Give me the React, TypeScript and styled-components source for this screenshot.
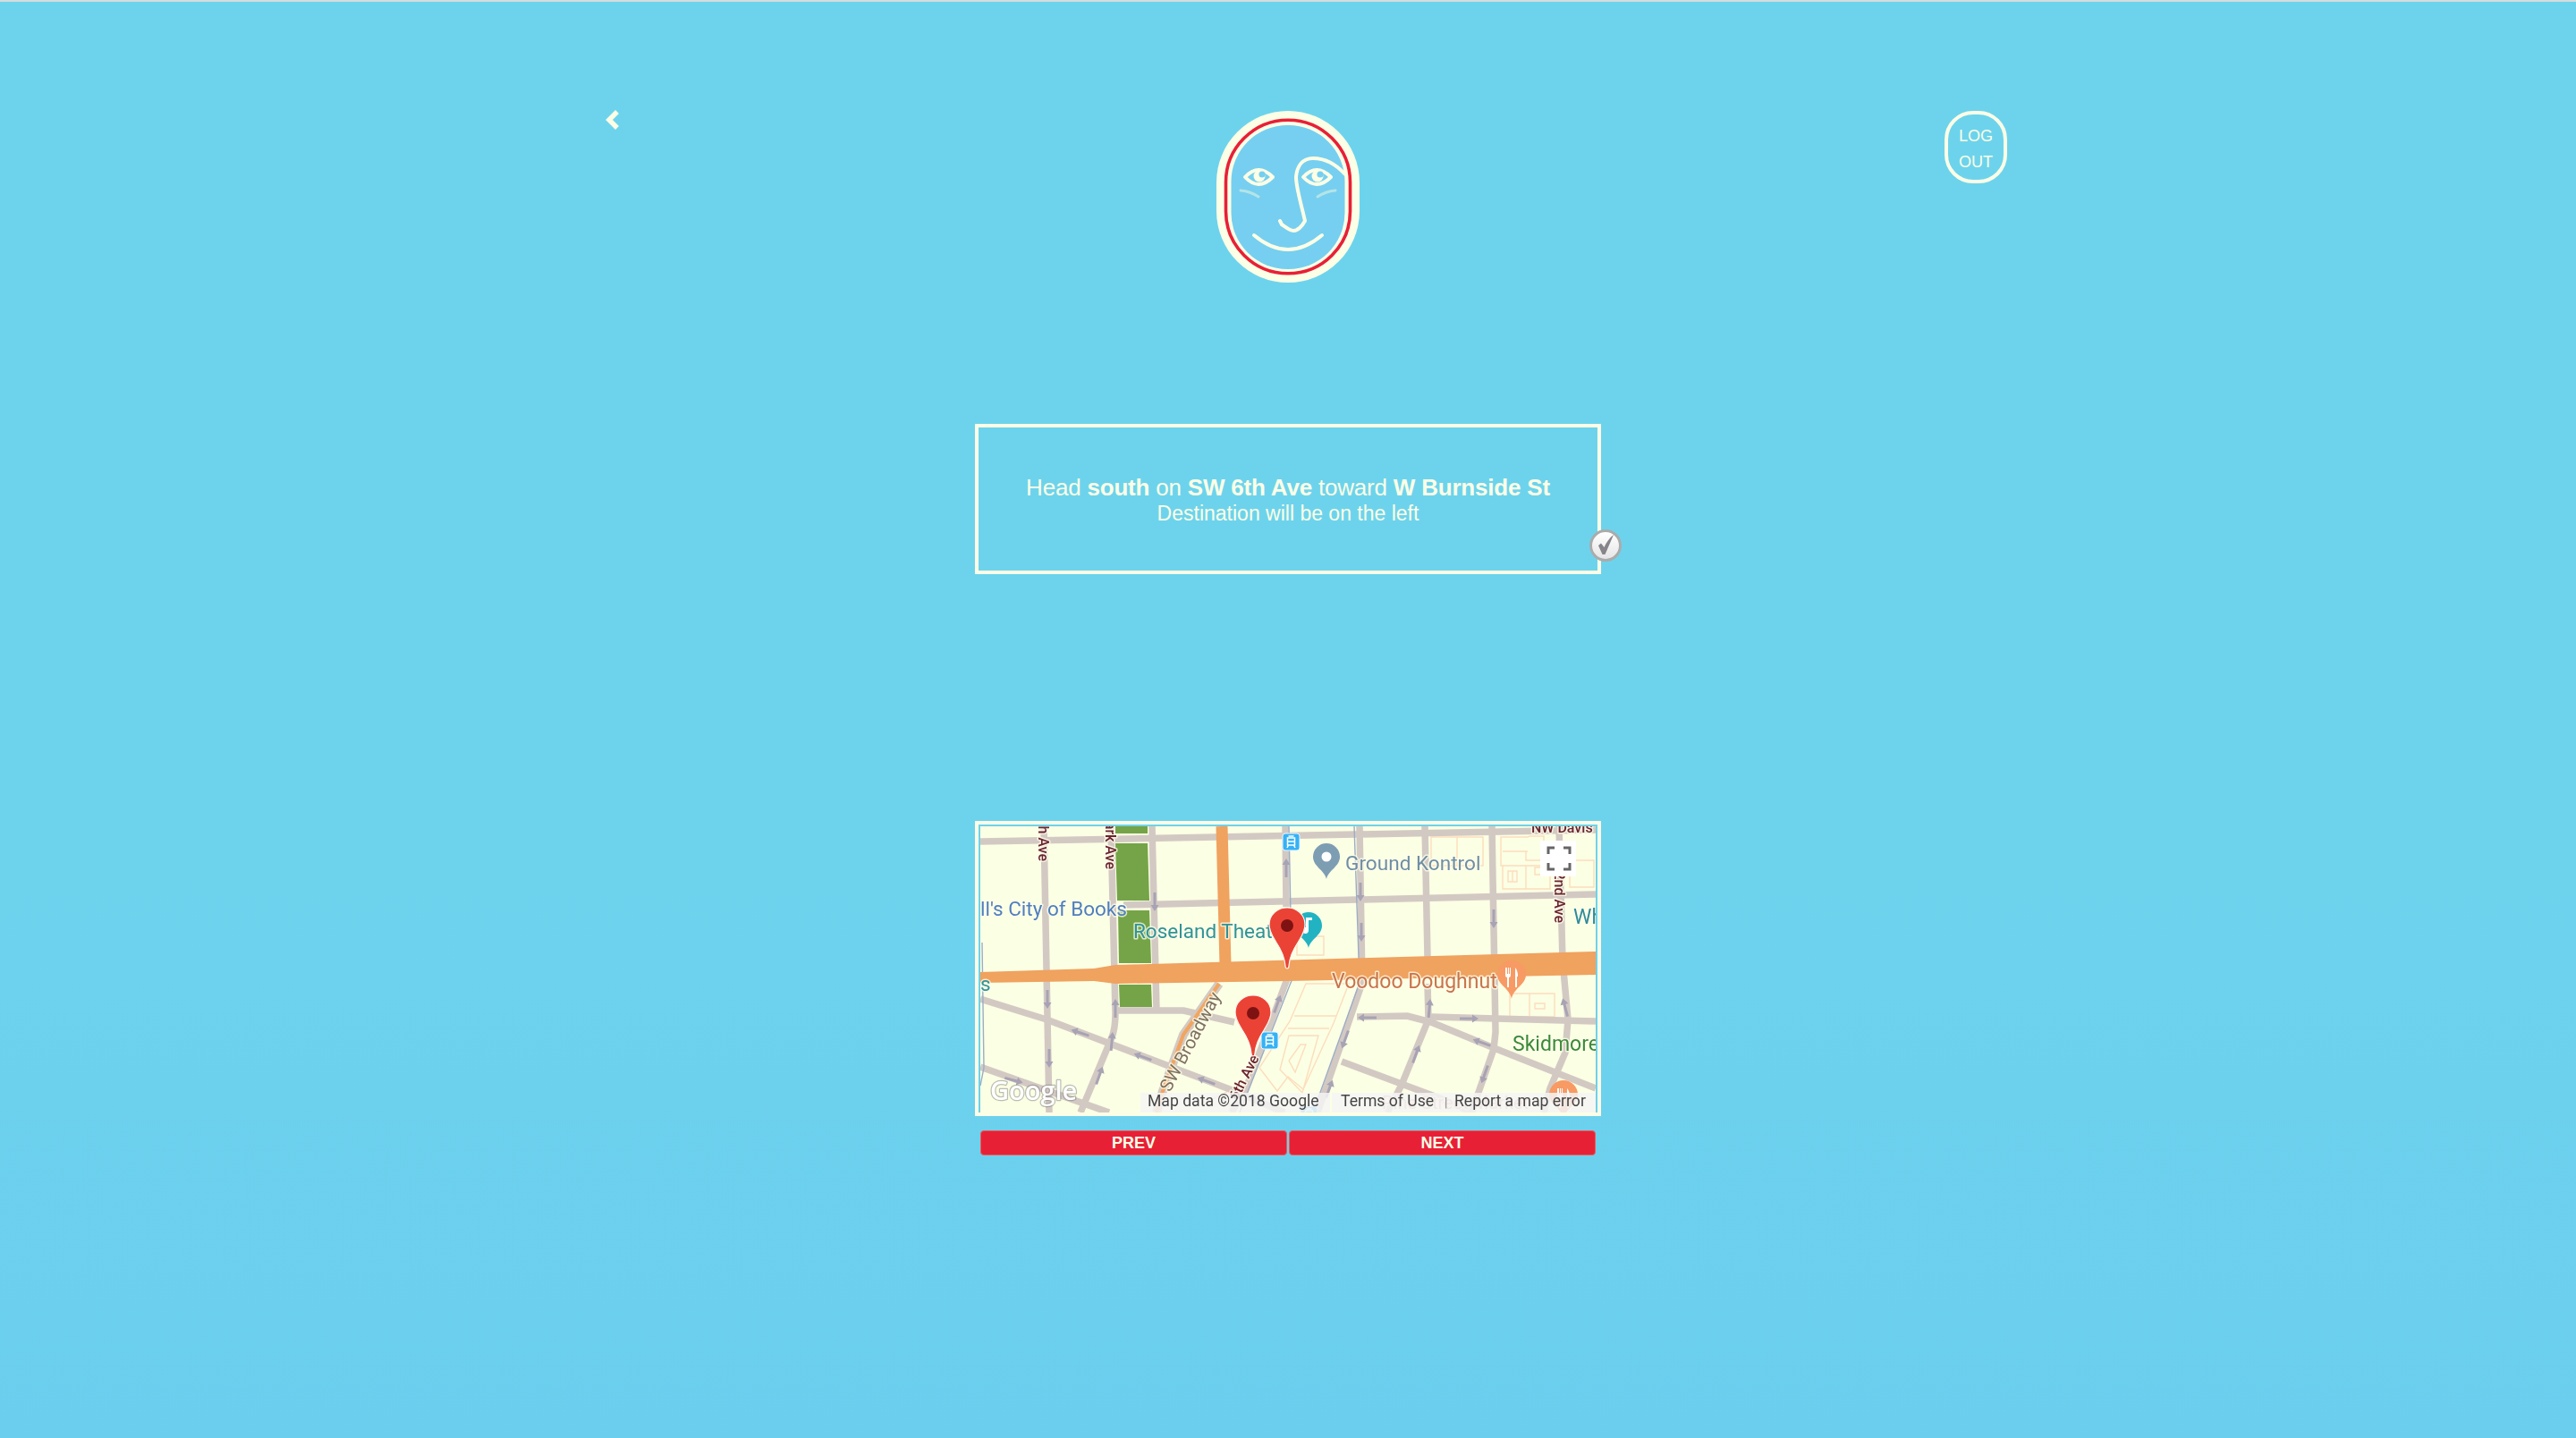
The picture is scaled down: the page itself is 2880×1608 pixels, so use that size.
import React from "react";
import styled, { createGlobalStyle } from "styled-components";

const CREAM = "#fbffe6";
const RED = "#e82036";

const Global = createGlobalStyle`
  html, body { margin: 0; padding: 0; }
  body { font-family: "Liberation Sans", Arial, sans-serif; }
`;

const Page = styled.main`
  width: 2880px;
  height: 1608px;
  overflow: hidden;
  display: flex;
  flex-direction: column;
  align-items: center;
  background: linear-gradient(180deg, #6dd3ed 0%, #6dd3ed 60%, #6bceee 100%);
  border-top: 2px solid #d6dcdc;
  box-sizing: border-box;
  color: ${CREAM};
`;

const Header = styled.header`
  width: 1608px;
  display: grid;
  grid-template-columns: 1fr 160px 1fr;
  align-items: start;
  padding-top: 120px;
`;

const BackButton = styled.button`
  justify-self: start;
  width: 16px;
  height: 24px;
  margin-left: 41px;
  padding: 0;
  border: 0;
  background: none;
  display: block;
`;

const LogoMark = styled.svg`
  width: 160px;
  height: 192px;
  margin-top: 2px;
  display: block;
`;

const LogOut = styled.button`
  justify-self: end;
  width: 70px;
  height: 81px;
  margin-top: 2px;
  padding: 4px 0 0;
  box-sizing: border-box;
  border: 4px solid ${CREAM};
  border-radius: 32px;
  background: none;
  color: ${CREAM};
  font: 400 18px/29px "Liberation Sans", Arial, sans-serif;
`;

const Instruction = styled.section`
  position: relative;
  width: 700px;
  height: 168px;
  margin-top: 158px;
  box-sizing: border-box;
  border: 4px solid ${CREAM};
  padding-top: 52px;
  text-align: center;
`;

const Primary = styled.div`
  font-size: 26px;
  line-height: 30px;
  letter-spacing: -0.2px;
  b { font-weight: 700; }
`;

const Secondary = styled.div`
  font-size: 23px;
  line-height: 28px;
`;

const CheckBadge = styled.span`
  position: absolute;
  right: -27px;
  bottom: 10px;
  width: 36px;
  height: 36px;
  box-sizing: border-box;
  border: 3px solid #ababab;
  border-radius: 50%;
  background: linear-gradient(180deg, #ffffff 0%, #e6e6e6 100%);
  display: flex;
  align-items: center;
  justify-content: center;
`;

const MapFrame = styled.section`
  width: 700px;
  height: 330px;
  margin-top: 276px;
  box-sizing: border-box;
  border: 4px solid ${CREAM};
  padding: 2px;
`;

const MapSvg = styled.svg`
  width: 688px;
  height: 320px;
  display: block;
  background: #fbffe4;
  font-family: Roboto, "Liberation Sans", sans-serif;
  filter: blur(0.45px);
`;

const Label = styled.text<{ $color: string; $size?: number; $halo?: boolean; $weight?: number; $end?: boolean }>`
  fill: ${(p) => p.$color};
  font-size: ${(p) => p.$size ?? 23}px;
  font-weight: ${(p) => p.$weight ?? 400};
  text-anchor: ${(p) => (p.$end ? "end" : "start")};
  ${(p) =>
    p.$halo === false
      ? ""
      : `stroke: rgba(255,255,235,0.75); stroke-width: 3px; paint-order: stroke; stroke-linejoin: round;`}
`;

const GoogleMark = styled.text`
  fill: #ffffff;
  font-family: "Open Sans", Roboto, sans-serif;
  font-size: 29px;
  font-weight: 600;
  stroke: rgba(110, 110, 110, 0.45);
  stroke-width: 2.5px;
  paint-order: stroke;
  stroke-linejoin: round;
`;

const Controls = styled.nav`
  width: 688px;
  margin-top: 16px;
  display: grid;
  grid-template-columns: 1fr 1fr;
  column-gap: 2px;
`;

const NavButton = styled.button`
  height: 28px;
  padding: 0;
  box-sizing: border-box;
  border: 1.5px solid #ea5a5a;
  border-radius: 4px;
  background: ${RED};
  color: ${CREAM};
  font: 700 18px/24px "Liberation Sans", Arial, sans-serif;
`;

const roads: string[] = [
  "M0,17 L688,4",
  "M160,88 L688,76",
  "M71,0 L77,320",
  "M146,0 L151,209 Q151,226 147,236 L112,320",
  "M192,0 L197,206",
  "M154,206 L227,206 L284,219",
  "M0,193 L74,216 L284,296 L340,320",
  "M0,269 L144,320",
  "M341,0 L342,90",
  "M347,160 L331,203 L297,293 L281,320",
  "M424,0 L427,175 L377,320",
  "M497,0 L500,146",
  "M500,176 L501,216 L471,289 L455,320",
  "M572,0 L576,230 L574,249 L554,306 L550,320",
  "M647,0 L651,150 L657,216 L654,253 L637,293 L630,320",
  "M421,213 L477,212 L504,219 L577,249 L688,293",
  "M504,213 L688,218",
  "M404,263 L511,303 L550,320",
];

const arrows: [number, number, number][] = [
  [195, 84, 180], [342, 47, 0], [75, 193, 180], [77, 259, 180], [151, 204, 0], [147, 241, 5],
  [133, 279, 20], [112, 231, 288], [182, 258, 290], [253, 285, 290], [37, 284, 105], [332, 199, 20],
  [425, 73, 180], [426, 118, 180], [574, 103, 180], [502, 204, 5], [433, 214, 270], [546, 215, 90],
  [561, 242, 290], [654, 203, 345], [408, 238, 200], [487, 255, 20], [564, 277, 200], [390, 294, 20],
];

const buildings: string[] = [
  "M504,12 H562 V44 H504 Z M533,12 V44",
  "M582,12 H612 L614,11 H630 V27 H637 V70 H584 V44 H582 Z M584,28 H612 M610,28 V38 H632 V44 H584 M610,44 V70",
  "M590,50 H600 V62 H590 Z M595,50 V62",
  "M620,46 H630 V54 H620 Z",
  "M659,38 H686 V68 H659 Z",
  "M592,187 H642 V213 H592 Z M614,187 V213 M620,198 H631 V204 H620 Z",
  "M354,123 H384 V144 H354 Z",
  "M364,176 H412 L395,220 L361,294 L344,280 L332,296 L312,270 L346,218 Z",
  "M351,212 H398 M344,226 H390",
  "M345,234 H378 L360,298 L335,272 Z",
  "M358,244 H364 L352,275 L345,262 Z",
  "M250,310 L275,297 L280,320",
];

const Pin = ({ x, y }: { x: number; y: number }) => (
  <g transform={`translate(${x} ${y})`}>
    <path
      d="M-2,65 C-3,53 -8,45 -12,39 C-16,32 -20,27 -20,19 C-20,8 -11,0 0,0 C11,0 20,8 20,19 C20,27 16,32 12,39 C8,45 3,53 2,65 C2,69 -2,69 -2,65 Z"
      fill="#ea4335"
      stroke="#fff7f0"
      strokeWidth="1.2"
    />
    <circle cy="20" r="7" fill="#7e1212" />
  </g>
);

const Drop = ({ x, y, color, r = 15, tip = 25 }: { x: number; y: number; color: string; r?: number; tip?: number }) => (
  <path
    d={`M${x},${y + tip} C${x - 2},${y + 15} ${x - r},${y + 11} ${x - r},${y} A${r},${r} 0 1 1 ${x + r},${y} C${x + r},${y + 11} ${x + 2},${y + 15} ${x},${y + tip} Z`}
    fill={color}
  />
);

const Tram = ({ x, y, s = 19 }: { x: number; y: number; s?: number }) => (
  <g transform={`translate(${x} ${y})`}>
    <rect width={s} height={s} rx="3" fill="#35b2f6" stroke="#e9f7ff" />
    <path d={`M${s / 2 - 4},5 h8 v8 h-8 Z M${s / 2 - 3},3 h6 M${s / 2 - 4},9 h8 M${s / 2 - 3},13 l-1.5,3 M${s / 2 + 3},13 l1.5,3`} fill="none" stroke="#fff" strokeWidth="1.5" />
  </g>
);

const StreetMap = () => (
  <MapSvg viewBox="0 0 688 320" role="img" aria-label="Map of downtown Portland">
    <g fill="#74a447">
      <path d="M151,0 H187 V8 H151 Z" />
      <path d="M151,19 H187 L189,83 H153 Z" />
      <path d="M154,94 H189 L191,153 H155 Z" />
      <path d="M155,177 H191 L192,202 H156 Z" />
    </g>
    <g fill="none" stroke="#fdddbd" strokeWidth="1.4">
      {buildings.map((d) => (
        <path key={d} d={d} />
      ))}
    </g>
    <g fill="none" stroke="#d3c9c3" strokeWidth="7.5" strokeLinejoin="round">
      {roads.map((d) => (
        <path key={d} d={d} />
      ))}
    </g>
    <path d="M267,176 L227,233 L204,296 L197,320" fill="none" stroke="#d3c9c3" strokeWidth="10" />
    <path d="M267,176 L227,233 L204,296 L197,320" fill="none" stroke="#f2a55f" strokeWidth="4" />
    <g fill="none" stroke="#9cadc6" strokeWidth="1.4">
      <path d="M2,130 L4,270 L0,290" />
      <path d="M345,0 L347,100 M352,150 Q352,165 345,180 L290,320" />
      <path d="M418,0 L424,175 L372,320" />
    </g>
    <path d="M270,0 L274,155" fill="none" stroke="#f0a25f" strokeWidth="13" />
    <path
      d="M0,163 L127,159 L151,155 L364,149 L688,140 L688,166 L344,173 L151,176 L127,173 L0,175 Z"
      fill="#f0a25f"
    />
    <g fill="#a7a3b4">
      {arrows.map(([x, y, a]) => (
        <path
          key={`${x}-${y}`}
          transform={`translate(${x} ${y}) rotate(${a})`}
          d="M0,-11 L4.5,-4 L1.5,-4 L1.5,10 L-1.5,10 L-1.5,-4 L-4.5,-4 Z"
        />
      ))}
    </g>

    <Label x="0" y="100" $color="#4f7fbd" $size={22.5}>ll's City of Books</Label>
    <Label x="171" y="125" $color="#2f9397" $size={22.5}>Roseland Theater</Label>
    <Label x="0" y="184" $color="#2f9397" $size={22.5}>s</Label>
    <Label x="408" y="49" $color="#6f8ea5" $size={22.6}>Ground Kontrol</Label>
    <Label x="393" y="181" $color="#c8744c" $size={23}>Voodoo Doughnut</Label>
    <Label x="595" y="251" $color="#3b8a3b" $size={23}>Skidmore</Label>
    <Label x="663" y="109" $color="#2f8b9b" $size={23}>Wh</Label>
    <Label x="616" y="7" $color="#6b2430" $size={16} $weight={500}>NW Davis</Label>
    <Label transform="translate(65 39) rotate(90)" $end $color="#6b2430" $size={16} $weight={500}>6th Ave</Label>
    <Label transform="translate(140 48) rotate(90)" $end $color="#6b2430" $size={16} $weight={500}>Park Ave</Label>
    <Label transform="translate(642 108) rotate(90)" $end $color="#6b2430" $size={16} $weight={500}>2nd Ave</Label>
    <Label transform="translate(312 259) rotate(-63)" $end $color="#6b2430" $size={16} $weight={500}>6th Ave</Label>
    <Label transform="translate(212 298) rotate(-62)" $color="#7d705c" $size={20}>SW Broadway</Label>
    <Label x="449" y="316" $color="#e3a28c" $size={20}>Pine Street Market</Label>

    <Drop x={367} y={111} color="#22b3c3" />
    <path d="M364,102 h7 v3 h-4 v11 a3.5,3.5 0 1 1 -3,-3 Z" fill="#fff" />
    <Drop x={387} y={34} color="#7d9db3" />
    <circle cx="387" cy="34" r="5.5" fill="#fff" />
    <Drop x={594} y={166} color="#f89a63" r={16} tip={27} />
    <path d="M587,158 v8 q0,3 2,3 v11 h2 v-11 q2,0 2,-3 v-8 h-1 v7 h-1 v-7 h-1 v7 h-1 v-7 Z M598,158 q3,3 3,10 h-1 v12 h-2 Z" fill="#fff" />
    <Drop x={652} y={300} color="#f89a63" r={16} tip={27} />
    <path d="M645,293 v8 q0,3 2,3 v11 h2 v-11 q2,0 2,-3 v-8 h-1 v7 h-1 v-7 h-1 v7 h-1 v-7 Z M656,293 q3,3 3,10 h-1 v12 h-2 Z" fill="#fff" />
    <Tram x={338} y={8} />
    <Tram x={314} y={230} />
    <Tram x={358} y={313} />

    <Pin x={343} y={91} />
    <Pin x={305} y={189} />

    <rect x="626" y="16" width="40" height="40" fill="#ffffff" />
    <path d="M635,31 V24 H642 M652,24 H659 V31 M659,41 V48 H652 M642,48 H635 V41" fill="none" stroke="#666" strokeWidth="3" />

    <GoogleMark x="11" y="306">Google</GoogleMark>
    <rect x="179" y="298" width="212" height="22" fill="#f5f5f5" fillOpacity="0.85" />
    <rect x="393" y="298" width="295" height="22" fill="#f5f5f5" fillOpacity="0.85" />
    <Label x="187" y="313" $color="#444" $size={17.6} $halo={false}>Map data ©2018 Google</Label>
    <Label x="403" y="313" $color="#444" $size={17.6} $halo={false}>Terms of Use</Label>
    <Label x="519" y="314" $color="#888" $size={14} $halo={false}>|</Label>
    <Label x="530" y="313" $color="#444" $size={17.6} $halo={false}>Report a map error</Label>
  </MapSvg>
);

const Logo = () => (
  <LogoMark viewBox="0 0 160 192" role="img" aria-label="Face logo">
    <rect width="160" height="192" rx="80" fill={CREAM} />
    <rect x="10.5" y="10.2" width="139" height="171.6" rx="69.5" fill="none" stroke={RED} strokeWidth="3.6" />
    <rect x="16.5" y="16" width="127" height="161" rx="63" fill="#76cff0" />
    <g fill="none" stroke={CREAM} strokeWidth="4" strokeLinecap="round" strokeLinejoin="round">
      <path d="M32,74 Q47,58 63,74 Q47,90 32,74 Z" />
      <path d="M97,74 Q112,58 128,74 Q112,90 97,74 Z" />
      <path d="M144,71 C133,59 122,53 108,53 C96,53 90,62 89,74 C89,86 95,105 99,123 C95,130 90,134 86,134 C82,134 76,129 73,127 L71,123" />
      <path d="M42,139 Q80,171 118,139" />
    </g>
    <g fill={CREAM}>
      <circle cx="48" cy="73" r="6.5" />
      <circle cx="113" cy="73" r="6.5" />
    </g>
    <g fill="#76cff0">
      <circle cx="51" cy="71" r="3.6" />
      <circle cx="116" cy="71" r="3.6" />
    </g>
    <g fill="none" stroke="#b4e4e8" strokeWidth="3" strokeLinecap="round">
      <path d="M27,89 Q38,90 47,96" />
      <path d="M133,89 Q122,90 113,96" />
    </g>
  </LogoMark>
);

export default function App() {
  return (
    <Page>
      <Global />
      <Header>
        <BackButton aria-label="Back">
          <svg width="16" height="24" viewBox="0 0 16 24">
            <path d="M13,3 L4,12 L13,21" fill="none" stroke={CREAM} strokeWidth="5.5" strokeLinejoin="miter" />
          </svg>
        </BackButton>
        <Logo />
        <LogOut>
          LOG
          <br />
          OUT
        </LogOut>
      </Header>
      <Instruction>
        <Primary>
          Head <b>south</b> on <b>SW 6th Ave</b> toward <b>W Burnside St</b>
        </Primary>
        <Secondary>Destination will be on the left</Secondary>
        <CheckBadge>
          <svg width="30" height="30" viewBox="0 0 30 30">
            <path d="M7,15 L10,12.5 L13.5,17 C16,11 20,6 24,3 L14.5,25 L11.5,25 Z" fill="#85858a" />
          </svg>
        </CheckBadge>
      </Instruction>
      <MapFrame>
        <StreetMap />
      </MapFrame>
      <Controls>
        <NavButton>PREV</NavButton>
        <NavButton>NEXT</NavButton>
      </Controls>
    </Page>
  );
}
